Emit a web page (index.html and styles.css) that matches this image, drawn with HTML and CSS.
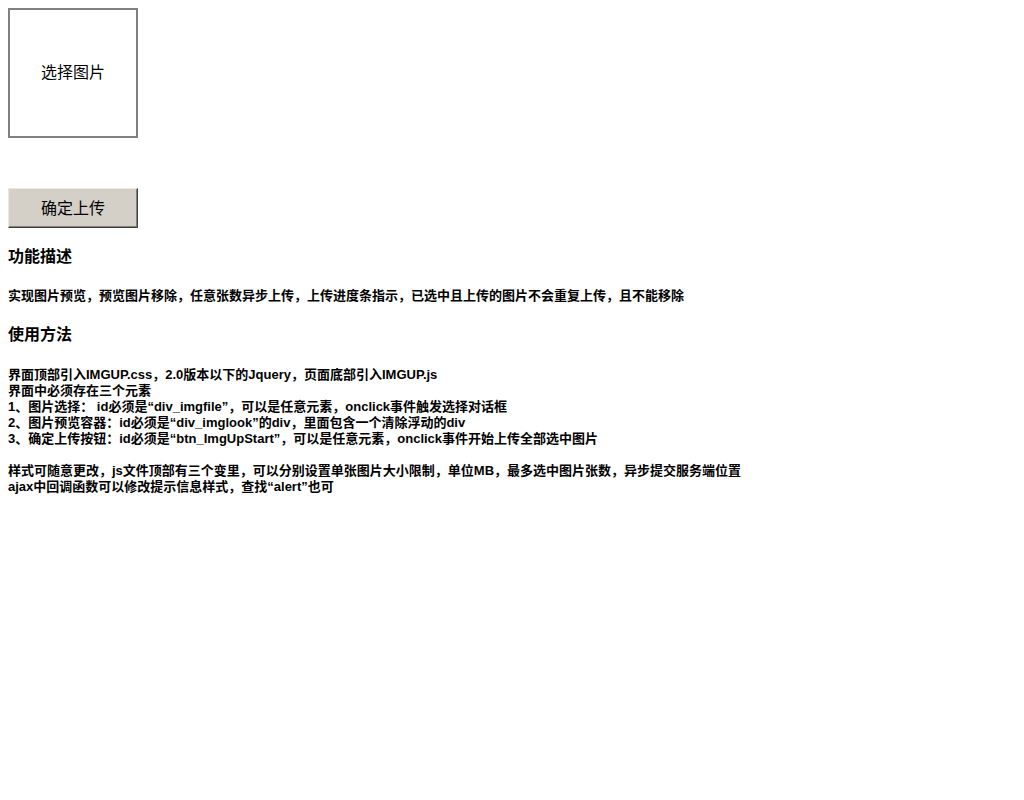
FILE: index.html
```html
<!DOCTYPE html>
<html>
<head>
<meta charset="utf-8">
<link rel="stylesheet" href="styles.css">
</head>
<body>
<div class="imgfile">选择图片</div>
<div class="imglook"></div>
<div class="upbtn">确定上传</div>
<h3 class="title">功能描述</h3>
<p class="desc">实现图片预览，预览图片移除，任意张数异步上传，上传进度条指示，已选中且上传的图片不会重复上传，且不能移除</p>
<h3 class="title">使用方法</h3>
<div class="usage">
<div>界面顶部引入IMGUP.css，2.0版本以下的Jquery，页面底部引入IMGUP.js</div>
<div>界面中必须存在三个元素</div>
<div>1、图片选择： id必须是“div_imgfile”，可以是任意元素，onclick事件触发选择对话框</div>
<div>2、图片预览容器：id必须是“div_imglook”的div，里面包含一个清除浮动的div</div>
<div>3、确定上传按钮：id必须是“btn_ImgUpStart”，可以是任意元素，onclick事件开始上传全部选中图片</div>
<div class="blank"></div>
<div>样式可随意更改，js文件顶部有三个变里，可以分别设置单张图片大小限制，单位MB，最多选中图片张数，异步提交服务端位置</div>
<div>ajax中回调函数可以修改提示信息样式，查找“alert”也可</div>
</div>
</body>
</html>
```
FILE: styles.css
```css
body {
  margin: 8px;
  font-family: "Liberation Sans", "Noto Sans CJK SC", sans-serif;
  color: #000;
  background: #fff;
}
.imgfile {
  width: 126px;
  height: 122px;
  padding-bottom: 4px;
  border: 2px solid #808080;
  display: flex;
  align-items: center;
  justify-content: center;
  font-size: 16px;
}
.imglook {
  height: 50px;
}
.upbtn {
  width: 128px;
  height: 35px;
  padding-bottom: 3px;
  background: #d4d0c8;
  border-top: 1px solid #e8e6e0;
  border-left: 1px solid #e8e6e0;
  border-right: 1px solid #404040;
  border-bottom: 1px solid #404040;
  box-shadow: inset -1px -1px 0 #808080;
  display: flex;
  align-items: center;
  justify-content: center;
  font-size: 16px;
}
.title {
  font-size: 16px;
  font-weight: bold;
  margin: 19px 0 0 0;
  line-height: 20px;
}
.desc {
  font-size: 13px;
  font-weight: bold;
  margin: 21px 0 21px 0;
  line-height: 16px;
}
.usage {
  margin-top: 22px;
  font-size: 13px;
  font-weight: bold;
  line-height: 16px;
}
.blank {
  height: 16px;
}
```
